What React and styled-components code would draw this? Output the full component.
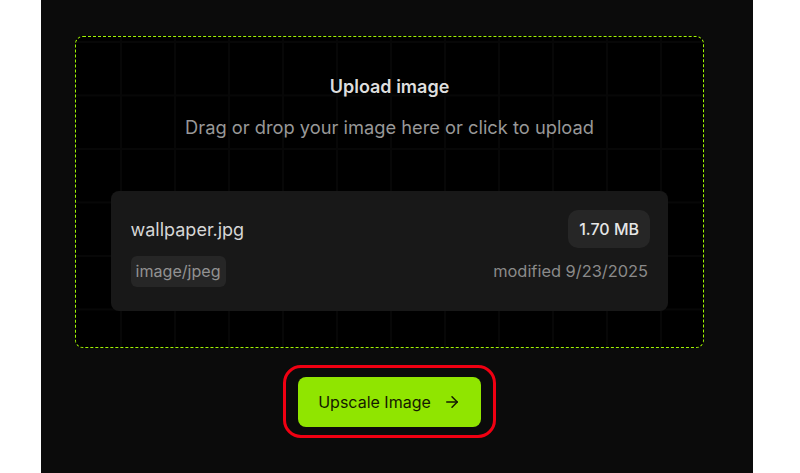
import React from 'react';
import styled, { createGlobalStyle } from 'styled-components';
import { ArrowRight } from 'lucide-react';

const GlobalStyle = createGlobalStyle`
    html, body {
        margin: 0;
        padding: 0;
        background: #fff;
        font-family: Inter, "Liberation Sans", sans-serif;
    }
`

const Panel = styled.main`
    box-sizing: border-box;
    width: 712px;
    height: 473px;
    margin-left: 41px;
    padding: 36px 49px 0 34px;
    background: #0b0b0b;
    display: flex;
    flex-direction: column;
    align-items: center;
`

const DropZone = styled.section`
    box-sizing: border-box;
    width: 629px;
    height: 312px;
    padding: 39px 35px 0 35px;
    border: 1px dashed #a0f500;
    border-radius: 8px;
    background-color: #000;
    background-image:
        linear-gradient(to right, #070707 2px, transparent 2px),
        linear-gradient(to bottom, #070707 2px, transparent 2px);
    background-size: 54px 53.5px;
    background-position: 44px 4px;
    display: flex;
    flex-direction: column;
    align-items: center;
`

const Title = styled.h2`
    margin: 0;
    font-size: 18px;
    line-height: 22px;
    font-weight: 600;
    color: #dedede;
`

const Hint = styled.p`
    margin: 18px 0 0;
    font-size: 18.3px;
    line-height: 22px;
    font-weight: 400;
    color: #989898;
`

const FileCard = styled.div`
    box-sizing: border-box;
    width: 557px;
    height: 120px;
    margin-top: 53px;
    padding: 19px 18px 0 19.5px;
    border-radius: 8px;
    background: #181818;
    display: grid;
    grid-template-columns: 1fr auto;
    grid-template-rows: 38px 26px;
    row-gap: 10px;
    align-items: center;
`

const FileName = styled.span`
    font-size: 18px;
    color: #d6d6d6;
`

const Size = styled.span`
    justify-self: end;
    padding: 0 11px;
    height: 38px;
    line-height: 38px;
    border-radius: 10px;
    background: #262626;
    font-size: 16px;
    font-weight: 500;
    color: #e6e6e6;
`

const FileType = styled.span`
    justify-self: start;
    padding: 0 5px;
    height: 31px;
    line-height: 31px;
    border-radius: 6px;
    background: #262626;
    font-size: 16.1px;
    color: #929292;
`

const Modified = styled.span`
    margin-right: 2px;
    font-size: 16.4px;
    color: #8a8a8a;
`

const ButtonFrame = styled.div`
    box-sizing: border-box;
    width: 213px;
    height: 73px;
    margin-top: 17px;
    border: 3px solid #f00012;
    border-radius: 18px;
    display: flex;
    align-items: center;
    justify-content: center;
`

const UpscaleButton = styled.button`
    box-sizing: border-box;
    width: 183px;
    height: 50px;
    padding: 0;
    border: 0;
    border-radius: 8px;
    background: #90e500;
    color: #141a00;
    font-family: inherit;
    font-size: 16px;
    display: flex;
    align-items: center;
    justify-content: center;
    gap: 12px;
`

export default function App() {
    return (
        <>
            <GlobalStyle />
            <Panel>
                <DropZone>
                    <Title>Upload image</Title>
                    <Hint>Drag or drop your image here or click to upload</Hint>
                    <FileCard>
                        <FileName>wallpaper.jpg</FileName>
                        <Size>1.70 MB</Size>
                        <FileType>image/jpeg</FileType>
                        <Modified>modified 9/23/2025</Modified>
                    </FileCard>
                </DropZone>
                <ButtonFrame>
                    <UpscaleButton>
                        Upscale Image
                        <ArrowRight size={18} strokeWidth={2} />
                    </UpscaleButton>
                </ButtonFrame>
            </Panel>
        </>
    )
}
